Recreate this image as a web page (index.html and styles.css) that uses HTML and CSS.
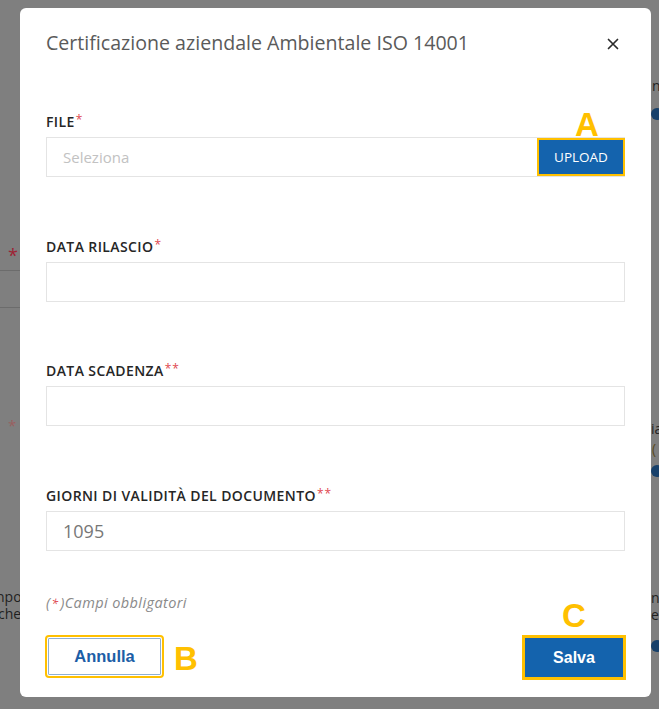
FILE: index.html
```html
<!DOCTYPE html>
<html lang="it">
<head>
<meta charset="utf-8">
<title>Certificazione aziendale Ambientale ISO 14001</title>
<link rel="stylesheet" href="styles.css">
</head>
<body>
<div class="page-behind" aria-hidden="true">
  <span class="frag frag-star1">*</span>
  <span class="frag-line frag-line1"></span>
  <span class="frag-line frag-line2"></span>
  <span class="frag frag-star2">*</span>
  <span class="frag frag-l1">npo</span>
  <span class="frag frag-l2">che</span>
  <span class="frag frag-r1">n</span>
  <span class="dot dot-r1"></span>
  <span class="frag frag-r2">ia</span>
  <span class="frag frag-r3">(</span>
  <span class="dot dot-r2"></span>
  <span class="frag frag-r4">nt</span>
  <span class="frag frag-r5">e</span>
  <span class="dot dot-r3"></span>
</div>

<div class="modal" role="dialog">
  <div class="modal-header">
    <h1 class="modal-title">Certificazione aziendale Ambientale ISO 14001</h1>
    <button class="close-btn" aria-label="Chiudi">
      <svg width="12" height="12" viewBox="0 0 12 12"><path d="M1.5 1.5 L10.5 10.5 M10.5 1.5 L1.5 10.5" stroke="#2b2b2b" stroke-width="1.7" fill="none" stroke-linecap="round"/></svg>
    </button>
  </div>

  <div class="modal-body">
    <div class="field">
      <label class="field-label">FILE<span class="req">*</span></label>
      <div class="input file-input">
        <span class="placeholder">Seleziona</span>
        <div class="upload-wrap">
          <span class="mark mark-a">A</span>
          <button class="upload-btn hl">UPLOAD</button>
        </div>
      </div>
    </div>

    <div class="field">
      <label class="field-label">DATA RILASCIO<span class="req">*</span></label>
      <div class="input"></div>
    </div>

    <div class="field">
      <label class="field-label">DATA SCADENZA<span class="req">**</span></label>
      <div class="input"></div>
    </div>

    <div class="field">
      <label class="field-label">GIORNI DI VALIDITÀ DEL DOCUMENTO<span class="req">**</span></label>
      <div class="input"><span class="value">1095</span></div>
    </div>

    <p class="note">(<span class="req">*</span>)Campi obbligatori</p>
  </div>

  <div class="modal-footer">
    <div class="btn-group">
      <button class="btn btn-secondary hl hl-gap">Annulla</button>
      <span class="mark mark-b">B</span>
    </div>
    <div class="btn-group save-wrap">
      <span class="mark mark-c">C</span>
      <button class="btn btn-primary hl">Salva</button>
    </div>
  </div>
</div>
</body>
</html>
```
FILE: styles.css
```css
* { box-sizing: border-box; }

html, body {
  margin: 0;
  padding: 0;
}

body {
  position: relative;
  width: 659px;
  height: 709px;
  overflow: hidden;
  background: #7f7f7f;
  font-family: "Open Sans", "Noto Sans", sans-serif;
  padding: 8px 0 0 20px;
}

/* dimmed page fragments behind the overlay */
.page-behind {
  position: absolute;
  inset: 0;
  z-index: 0;
}
.frag {
  position: absolute;
  font-family: "Open Sans", sans-serif;
  font-size: 14px;
  line-height: 13px;
  color: #1f1f1f;
}
.frag-star1 { left: 8px; top: 249px; color: #9e2334; font-size: 18px; }
.frag-star2 { left: 8px; top: 419px; color: #9a6060; font-size: 15px; }
.frag-line { position: absolute; left: 0; width: 20px; height: 1px; background: #6c6c6c; }
.frag-line1 { top: 270px; }
.frag-line2 { top: 307px; }
.frag-l1 { left: -4px; top: 590px; }
.frag-l2 { left: -2px; top: 607px; }
.frag-r1 { left: 652px; top: 79px; }
.frag-r2 { left: 651px; top: 422px; }
.frag-r3 { left: 652px; top: 442px; color: #5a4a20; }
.frag-r4 { left: 651px; top: 591px; }
.frag-r5 { left: 651px; top: 608px; }
.dot {
  position: absolute;
  left: 651px;
  width: 12px;
  height: 12px;
  border-radius: 50%;
  background: #17406a;
}
.dot-r1 { top: 108px; }
.dot-r2 { top: 465px; }
.dot-r3 { top: 640px; }

/* modal */
.modal {
  position: relative;
  z-index: 1;
  width: 631px;
  height: 689px;
  background: #fff;
  border-radius: 6px;
  display: flex;
  flex-direction: column;
  padding: 23px 26px 0 26px;
}

.modal-header {
  display: flex;
  align-items: center;
  justify-content: space-between;
  height: 24px;
}

.modal-title {
  margin: 0;
  font-size: 19.6px;
  line-height: 24px;
  font-weight: 400;
  color: #5a5a5a;
}

.close-btn {
  width: 16px;
  height: 16px;
  border: 0;
  padding: 0;
  margin-right: 4px;
  margin-top: 2px;
  background: transparent;
  display: flex;
  align-items: center;
  justify-content: center;
}

.modal-body {
  margin-top: 58px;
  display: flex;
  flex-direction: column;
}

.field {
  display: flex;
  flex-direction: column;
  margin-bottom: 60.5px;
}

.field-label {
  font-size: 14px;
  line-height: 18px;
  font-weight: 600;
  letter-spacing: 0.4px;
  color: #262626;
  margin-bottom: 6px;
}

.req {
  color: #e0474f;
  font-size: 12px;
  font-weight: 500;
  vertical-align: top;
  line-height: 14px;
  margin-left: 1px;
  letter-spacing: 1px;
}

.input {
  height: 40px;
  border: 1.5px solid #e4e4e4;
  background: #fff;
  display: flex;
  align-items: center;
  padding-left: 16px;
}

.file-input {
  justify-content: space-between;
  padding-right: 1px;
}

.placeholder {
  font-size: 15px;
  color: #c2c2c2;
}

.value {
  font-size: 18px;
  color: #777;
}

.upload-wrap {
  position: relative;
  display: flex;
}

.upload-btn {
  width: 84px;
  height: 34px;
  border: 0;
  background: #1463ad;
  color: #fff;
  font-family: "Open Sans", sans-serif;
  font-size: 13.5px;
  font-weight: 500;
  padding: 0;
}

.hl {
  outline: 2.5px solid #ffc000;
}

.hl-gap {
  outline-offset: 1px;
}

.mark {
  font-family: "Liberation Sans", Arial, sans-serif;
  font-weight: 700;
  font-size: 33px;
  line-height: 33px;
  color: #ffc000;
}

.mark-a {
  position: absolute;
  left: 36px;
  top: -32px;
}

.note {
  margin: -17px 0 0 0;
  font-size: 14.5px;
  line-height: 17px;
  letter-spacing: 0.4px;
  font-style: italic;
  color: #8a8a8a;
}

.note .req {
  font-size: 12px;
  vertical-align: baseline;
  margin: 0 1px;
}

.modal-footer {
  margin-top: 27px;
  display: flex;
  justify-content: space-between;
  align-items: flex-start;
  padding-left: 2px;
  padding-right: 2px;
}

.btn-group {
  position: relative;
  display: flex;
  align-items: center;
}

.btn {
  font-family: "Liberation Sans", Arial, sans-serif;
  font-weight: 700;
  font-size: 16.5px;
  cursor: pointer;
}

.btn-secondary {
  width: 113px;
  height: 37px;
  background: #fff;
  color: #1c5ea6;
  border: 1px solid #8fb0d3;
  border-radius: 1px;
}

.mark-b {
  margin-left: 13px;
  margin-top: 4px;
}

.btn-primary {
  width: 98px;
  height: 39px;
  background: #1463ad;
  color: #fff;
  border: 0;
  font-size: 16px;
}

.hl.btn-primary {
  outline-width: 3px;
}

.mark-c {
  position: absolute;
  left: 37px;
  top: -39px;
}
```
